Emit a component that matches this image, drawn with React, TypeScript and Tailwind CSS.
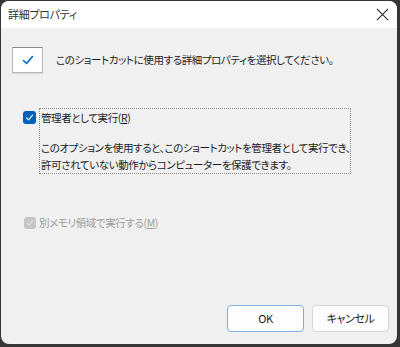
const jp = "font-['Yu_Gothic_UI','Noto_Sans_CJK_JP',sans-serif] [font-feature-settings:'palt']";

function CheckMark({ className }: { className?: string }) {
  return (
    <svg viewBox="0 0 16 16" className={className} fill="none">
      <path d="M3.5 8.5 L6.5 11.5 L12.5 4.5" stroke="currentColor" strokeWidth="1.6" strokeLinecap="round" strokeLinejoin="round" />
    </svg>
  );
}

export default function App() {
  return (
    <div className={`w-[400px] h-[347px] bg-[#363636] pt-px pl-px pr-[3px] pb-[3px] ${jp}`}>
      <div className="h-full flex flex-col rounded-lg overflow-hidden bg-[#f0f0f0]">
        <div className="h-[27px] shrink-0 bg-white flex items-center justify-between pl-[7px] pr-[8px]">
          <span className="text-[11px] tracking-[-0.3px] leading-none text-[#333]">詳細プロパティ</span>
          <svg viewBox="0 0 14 14" className="w-[13px] h-[13px] text-[#222]">
            <path d="M1 1 L13 13 M13 1 L1 13" stroke="currentColor" strokeWidth="1.1" />
          </svg>
        </div>

        <div className="flex-1 flex flex-col text-[10.5px] tracking-[-0.4px]">
          <div className="flex items-center mt-[19px] ml-[11px]">
            <div className="w-[31px] h-[26px] bg-white border border-[#b8b8b8] border-t-[#8a8a8a] shadow-[0_1px_0_#d8d8d8] flex items-center justify-center">
              <CheckMark className="w-[16px] h-[16px] text-[#0067c0]" />
            </div>
            <span className="ml-[13px] leading-[16px] text-[#1b1b1b]">
              このショートカットに使用する詳細プロパティを選択してください。
            </span>
          </div>

          <div className="flex items-start mt-[35px] ml-[22px]">
            <div className="mt-[3px] w-[13px] h-[13px] rounded-[3px] bg-[#005fb8] flex items-center justify-center">
              <CheckMark className="w-[11px] h-[11px] text-white" />
            </div>
            <div className="ml-[3px] w-[312px] border border-dotted border-[#8c8c8c] px-[1px] leading-[17px] text-[#1b1b1b]">
              <div>
                管理者として実行(<span className="underline">R</span>)
              </div>
              <div className="mt-[13px] whitespace-nowrap">
                このオプションを使用すると、このショートカットを管理者として実行でき、
                <br />
                許可されていない動作からコンピューターを保護できます。
              </div>
            </div>
          </div>

          <div className="flex items-center mt-[41px] ml-[23px]">
            <div className="w-[12px] h-[12px] rounded-[3px] bg-[#c5c5c5] flex items-center justify-center">
              <CheckMark className="w-[10px] h-[10px] text-[#ececec]" />
            </div>
            <span className="ml-[3px] leading-[16px] text-[#9d9d9d]">
              別メモリ領域で実行する(<span className="underline">M</span>)
            </span>
          </div>

          <div className="mt-auto mb-[12px] mr-[8px] flex justify-end gap-[8px]">
            <button className="w-[77px] h-[27px] rounded-[4px] bg-[#fdfdfd] border border-[#80aee0] text-[11px] text-[#1b1b1b]">
              OK
            </button>
            <button className="w-[77px] h-[27px] rounded-[4px] bg-[#fdfdfd] border border-[#d5d5d5] text-[11px] text-[#1b1b1b]">
              キャンセル
            </button>
          </div>
        </div>
      </div>
    </div>
  );
}
